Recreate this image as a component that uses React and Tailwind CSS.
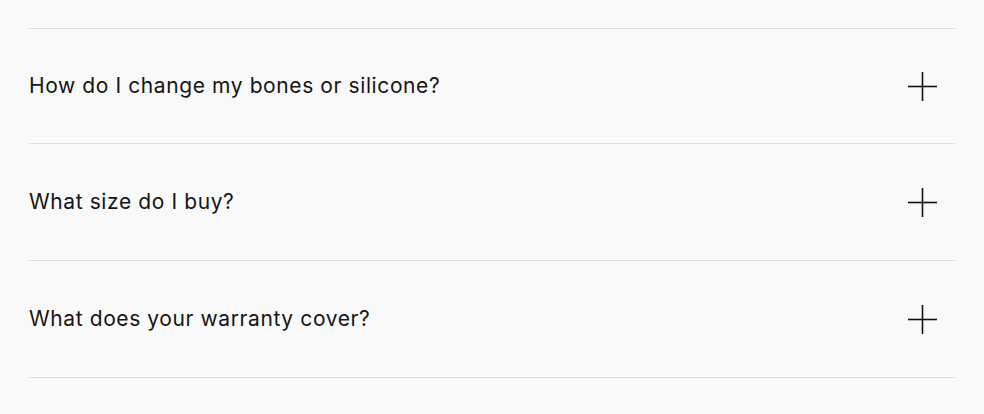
import React from 'react';

const questions = [
  'How do I change my bones or silicone?',
  'What size do I buy?',
  'What does your warranty cover?',
];

function PlusIcon() {
  return (
    <svg width="29" height="29" viewBox="0 0 29 29" fill="none" stroke="#111" strokeWidth="1.6">
      <path d="M14.5 0V29" />
      <path d="M0 14.5H29" />
    </svg>
  );
}

export default function App() {
  return (
    <div className="min-h-[414px] w-full bg-[#f9f9f9] px-[29px] pt-[28px]" style={{ fontFamily: "Inter, 'Noto Sans', sans-serif" }}>
      <div className="border-t border-[#dedede]">
        {questions.map((q, i) => (
          <button
            key={q}
            className={`flex w-full items-center justify-between border-b border-[#dedede] pr-[18px] text-left ${i === 0 ? 'h-[115px]' : 'h-[117px]'}`}
          >
            <span className="text-[21px] text-[#151515] tracking-[0.6px]">{q}</span>
            <PlusIcon />
          </button>
        ))}
      </div>
    </div>
  );
}
